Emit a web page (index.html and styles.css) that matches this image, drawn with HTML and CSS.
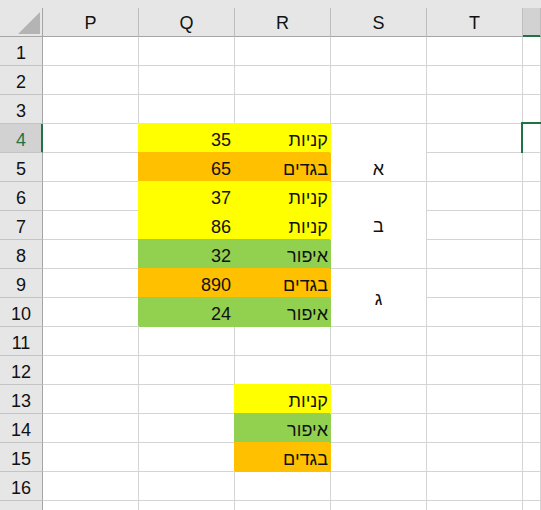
FILE: index.html
```html
<!DOCTYPE html>
<html>

<head>
    <meta charset="utf-8">
    <link rel="stylesheet" href="styles.css">
</head>

<body>
    <!-- sheet: row header + columns P..U -->
    <div class="sheet">
        <div class="corner"><div class="corner-mark"></div></div>
        <div class="ch">P</div><div class="ch">Q</div><div class="ch">R</div><div class="ch">S</div><div class="ch">T</div><div class="ch sel-col"></div>

        <div class="rh">1</div><div class="c"></div><div class="c"></div><div class="c"></div><div class="c"></div><div class="c"></div><div class="c"></div>
        <div class="rh">2</div><div class="c"></div><div class="c"></div><div class="c"></div><div class="c"></div><div class="c"></div><div class="c"></div>
        <div class="rh">3</div><div class="c"></div><div class="c"></div><div class="c"></div><div class="c"></div><div class="c"></div><div class="c"></div>

        <div class="rh sel-row">4</div><div class="c"></div><div class="c num yellow">35</div><div class="c txt yellow">קניות</div>
        <div class="c merged span2 bottom">א</div><div class="c"></div><div class="c sel-cell"></div>
        <div class="rh">5</div><div class="c"></div><div class="c num orange">65</div><div class="c txt orange">בגדים</div><div class="c"></div><div class="c"></div>

        <div class="rh">6</div><div class="c"></div><div class="c num yellow">37</div><div class="c txt yellow">קניות</div>
        <div class="c merged span3 middle">ב</div><div class="c"></div><div class="c"></div>
        <div class="rh">7</div><div class="c"></div><div class="c num yellow">86</div><div class="c txt yellow">קניות</div><div class="c"></div><div class="c"></div>
        <div class="rh">8</div><div class="c"></div><div class="c num green">32</div><div class="c txt green">איפור</div><div class="c"></div><div class="c"></div>

        <div class="rh">9</div><div class="c"></div><div class="c num orange">890</div><div class="c txt orange">בגדים</div>
        <div class="c merged span2 middle">ג</div><div class="c"></div><div class="c"></div>
        <div class="rh">10</div><div class="c"></div><div class="c num green">24</div><div class="c txt green">איפור</div><div class="c"></div><div class="c"></div>

        <div class="rh">11</div><div class="c"></div><div class="c"></div><div class="c"></div><div class="c"></div><div class="c"></div><div class="c"></div>
        <div class="rh">12</div><div class="c"></div><div class="c"></div><div class="c"></div><div class="c"></div><div class="c"></div><div class="c"></div>
        <div class="rh">13</div><div class="c"></div><div class="c"></div><div class="c txt yellow">קניות</div><div class="c"></div><div class="c"></div><div class="c"></div>
        <div class="rh">14</div><div class="c"></div><div class="c"></div><div class="c txt green">איפור</div><div class="c"></div><div class="c"></div><div class="c"></div>
        <div class="rh">15</div><div class="c"></div><div class="c"></div><div class="c txt orange">בגדים</div><div class="c"></div><div class="c"></div><div class="c"></div>
        <div class="rh">16</div><div class="c"></div><div class="c"></div><div class="c"></div><div class="c"></div><div class="c"></div><div class="c"></div>
        <div class="rh">17</div><div class="c"></div><div class="c"></div><div class="c"></div><div class="c"></div><div class="c"></div><div class="c"></div>
    </div>
</body>

</html>
```

FILE: styles.css
```css
html,
body {
    margin: 0;
    height: 100%;
    overflow: hidden;
    background-color: #fff;
}

/* Excel-like grid */
.sheet {
    display: grid;
    grid-template-columns: 43px repeat(5, 96px) 1fr;
    grid-auto-rows: 29px;
    padding-top: 8px;
    background-color: #e6e6e6;
    font-family: "Liberation Sans", "DejaVu Sans", sans-serif;
    font-size: 18px;
    line-height: 20px;
    color: #111;
}

.sheet > div {
    box-sizing: border-box;
}

.corner {
    display: flex;
    justify-content: flex-end;
    align-items: flex-end;
    padding: 0 2px 2px 0;
    border-right: 1px solid #a5a5a5;
    border-bottom: 1px solid #a5a5a5;
}

.corner-mark {
    width: 22px;
    height: 22px;
    background-color: #b4b4b4;
    clip-path: polygon(100% 0, 100% 100%, 0 100%);
}

/* column headers */
.ch {
    display: flex;
    justify-content: center;
    align-items: flex-end;
    padding-bottom: 3px;
    border-right: 1px solid #bdbdbd;
    border-bottom: 1px solid #a5a5a5;
}

.sel-col {
    background-color: #d2d2d2;
    border-bottom-color: #217346;
    box-shadow: inset 0 -1px 0 #217346;
}

/* row headers */
.rh {
    display: flex;
    justify-content: center;
    align-items: flex-end;
    padding-bottom: 2px;
    border-right: 1px solid #a5a5a5;
    border-bottom: 1px solid #c4c4c4;
}

.sel-row {
    background-color: #d2d2d2;
    color: #217346;
    border-right-color: #217346;
    box-shadow: inset -1px 0 0 #217346;
}

/* cells */
.c {
    display: flex;
    align-items: flex-end;
    background-color: #fff;
    border-right: 1px solid #d4d4d4;
    border-bottom: 1px solid #d4d4d4;
    padding: 0 3px 2px;
}

.num {
    justify-content: flex-end;
}

.txt {
    justify-content: flex-end;
    padding-right: 2px;
}

.merged {
    justify-content: center;
}

.span2 {
    grid-row: span 2;
}

.span3 {
    grid-row: span 3;
}

.middle {
    align-items: center;
    padding-top: 4px;
}

.yellow {
    background-color: #ffff00;
    border-color: #ffff00;
    box-shadow: -1px -1px 0 #ffff00;
}

.orange {
    background-color: #ffc000;
    border-color: #ffc000;
    box-shadow: -1px -1px 0 #ffc000;
}

.green {
    background-color: #92d050;
    border-color: #92d050;
    box-shadow: -1px -1px 0 #92d050;
}

.sel-cell {
    outline: 2px solid #217346;
}
```
